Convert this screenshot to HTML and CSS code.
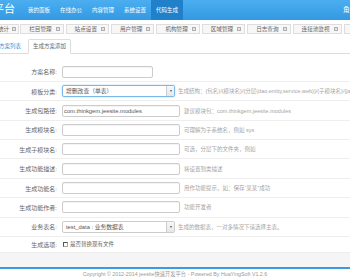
FILE: index.html
```html
<!DOCTYPE html>
<html lang="zh-CN">
<head>
    <meta charset="UTF-8">
    <title>生成方案添加</title>
    <link rel="stylesheet" href="styles.css">
</head>
<body>
    <!-- Top Menu -->
    <header class="topbar">
        <div class="brand">平台</div>
        <ul class="menu">
            <li><a href="#">我的面板</a></li>
            <li><a href="#">在线办公</a></li>
            <li><a href="#">内容管理</a></li>
            <li><a href="#">系统设置</a></li>
            <li class="active"><a href="#">代码生成</a></li>
        </ul>
        <div class="user">角色</div>
    </header>

    <!-- Open Page Tabs -->
    <div class="tabbar">
        <div class="tab first">统计<i class="close"></i></div>
        <div class="tab">栏目管理<i class="close"></i></div>
        <div class="tab">站点设置<i class="close"></i></div>
        <div class="tab">用户管理<i class="close"></i></div>
        <div class="tab">机构管理<i class="close"></i></div>
        <div class="tab">区域管理<i class="close"></i></div>
        <div class="tab">日志查询<i class="close"></i></div>
        <div class="tab">连接池监视<i class="close"></i></div>
        <div class="tab">全部<i class="close"></i></div>
    </div>

    <!-- Sub Navigation -->
    <ul class="nav-tabs">
        <li><a href="#">方案列表</a></li>
        <li class="active"><a href="#">生成方案添加</a></li>
    </ul>

    <!-- Scheme Form -->
    <form class="form">
        <div class="group">
            <label class="label">方案名称:</label>
            <div class="controls">
                <input type="text" class="input short" value="">
            </div>
        </div>
        <div class="group">
            <label class="label">模板分类:</label>
            <div class="controls">
                <div class="select focus">
                    <span class="select-text">增删改查（单表）</span>
                    <span class="select-arrow"><b></b></span>
                </div>
                <span class="help narrow">生成结构：{包名}/{模块名}/{分层(dao,entity,service,web)}/{子模块名}/{java类}</span>
            </div>
        </div>
        <div class="group">
            <label class="label">生成包路径:</label>
            <div class="controls">
                <input type="text" class="input" value="com.thinkgem.jeesite.modules">
                <span class="help">建议模块包：com.thinkgem.jeesite.modules</span>
            </div>
        </div>
        <div class="group">
            <label class="label">生成模块名:</label>
            <div class="controls">
                <input type="text" class="input" value="">
                <span class="help">可理解为子系统名，例如 sys</span>
            </div>
        </div>
        <div class="group">
            <label class="label">生成子模块名:</label>
            <div class="controls">
                <input type="text" class="input" value="">
                <span class="help">可选，分层下的文件夹，例如</span>
            </div>
        </div>
        <div class="group">
            <label class="label">生成功能描述:</label>
            <div class="controls">
                <input type="text" class="input" value="">
                <span class="help">将设置到类描述</span>
            </div>
        </div>
        <div class="group">
            <label class="label">生成功能名:</label>
            <div class="controls">
                <input type="text" class="input" value="">
                <span class="help">用作功能提示，如：保存“某某”成功</span>
            </div>
        </div>
        <div class="group">
            <label class="label">生成功能作者:</label>
            <div class="controls">
                <input type="text" class="input" value="">
                <span class="help">功能开发者</span>
            </div>
        </div>
        <div class="group">
            <label class="label">业务表名:</label>
            <div class="controls">
                <div class="select">
                    <span class="select-text">test_data : 业务数据表</span>
                    <span class="select-arrow"><b></b></span>
                </div>
                <span class="help narrow">生成的数据表，一对多情况下请选择主表。</span>
            </div>
        </div>
        <div class="group last">
            <label class="label">生成选项:</label>
            <div class="controls">
                <span class="check"><i class="box"></i>是否替换现有文件</span>
            </div>
        </div>
        <div class="actions"></div>
    </form>

    <!-- Footer -->
    <footer class="footer">Copyright &copy; 2012-2014 jeesite快速开发平台 - Powered By HuaYingSoft V1.2.6</footer>
</body>
</html>
```

FILE: styles.css
```css
/* General Reset */
* {
    box-sizing: border-box;
}

body {
    margin: 0;
    width: 350px;
    height: 280px;
    overflow: hidden;
    background: #fff;
    color: #555;
    font-family: "Liberation Sans", "Noto Sans CJK SC", sans-serif;
}

ul {
    margin: 0;
    padding: 0;
    list-style: none;
}

a {
    text-decoration: none;
}

/* Top Menu */
.topbar {
    display: flex;
    height: 20px;
    background: linear-gradient(#4aaef0, #3499e2);
    color: #fff;
}

.brand {
    flex: none;
    width: 30px;
    margin-left: -7px;
    font-size: 11px;
    line-height: 18px;
    white-space: nowrap;
}

.menu {
    display: flex;
}

.menu a {
    display: block;
    padding: 0 5px;
    font-size: 5.5px;
    line-height: 20px;
    color: #fff;
}

.menu .active a {
    background: #2080c9;
}

.user {
    margin-left: auto;
    width: 7px;
    overflow: hidden;
    white-space: nowrap;
    font-size: 6.5px;
    line-height: 20px;
}

/* Open Page Tabs */
.tabbar {
    display: flex;
    height: 10px;
    margin-top: 4px;
}

.tab {
    flex: none;
    display: flex;
    align-items: center;
    gap: 4px;
    padding: 0 3px 0 8px;
    margin-right: 2px;
    border: 1px solid #dedede;
    background: #f7f7f7;
    font-size: 5.6px;
    color: #666;
    white-space: nowrap;
}

.tab.first {
    margin-left: -11px;
    gap: 3px;
    padding-right: 2px;
    margin-right: 1px;
}

.close {
    width: 4px;
    height: 4px;
    border: 1px solid #b0b0b0;
    background: #e6e6e6;
}

/* Sub Navigation */
.nav-tabs {
    display: flex;
    margin: 5px 0 0 -6px;
    border-bottom: 1px solid #ddd;
}

.nav-tabs li {
    margin-bottom: -1px;
    margin-right: 2px;
}

.nav-tabs a {
    display: block;
    padding: 0 4px;
    font-size: 5.5px;
    line-height: 13px;
    color: #3390da;
    border: 1px solid transparent;
    border-radius: 2px 2px 0 0;
}

.nav-tabs .active a {
    color: #666;
    background: #fff;
    border-color: #ddd #ddd transparent;
}

/* Scheme Form */
.form {
    margin-top: 8.6px;
}

.group {
    display: flex;
    align-items: center;
    padding: 3.2px 0;
    border-bottom: 1px solid #eeeeee;
}

.label {
    flex: none;
    width: 57px;
    text-align: right;
    font-size: 6px;
    color: #666;
}

.controls {
    flex: none;
    display: flex;
    align-items: center;
    margin-left: 5px;
}

.input {
    flex: none;
    width: 118px;
    height: 12px;
    margin: 0;
    padding: 0 1px;
    border: 1px solid #ccc;
    border-radius: 2px;
    box-shadow: inset 0 1px 1px rgba(0, 0, 0, 0.05);
    font-family: inherit;
    font-size: 5.8px;
    color: #555;
    outline: none;
}

.input.short {
    width: 91px;
}

.select {
    flex: none;
    display: flex;
    width: 113px;
    height: 12px;
    border: 1px solid #ccc;
    border-radius: 2px;
    background: #fff;
}

.select.focus {
    border-color: #7db9e8;
    box-shadow: 0 0 2px rgba(82, 168, 236, 0.5);
}

.select-text {
    flex: 1;
    padding-left: 3px;
    font-size: 5.8px;
    line-height: 10px;
    color: #555;
    white-space: nowrap;
}

.select-arrow {
    flex: none;
    width: 8px;
    display: flex;
    align-items: center;
    justify-content: center;
    border-left: 1px solid #ccc;
    background: linear-gradient(#f8f8f8, #e6e6e6);
}

.select-arrow b {
    border-left: 1.5px solid transparent;
    border-right: 1.5px solid transparent;
    border-top: 2px solid #555;
}

.help {
    margin-left: 4px;
    font-size: 5.5px;
    color: #a5a5a5;
    white-space: nowrap;
}

.help.narrow {
    margin-left: 3px;
}

.check {
    display: flex;
    align-items: center;
    gap: 2px;
    margin-left: 1px;
    font-size: 5.5px;
    line-height: 8.6px;
    color: #666;
}

.box {
    width: 5px;
    height: 5px;
    border: 1px solid #555;
    border-right-color: #aaa;
    border-bottom-color: #aaa;
    background: #fff;
}

.actions {
    height: 13.6px;
    background: #f5f5f5;
}

/* Footer */
.footer {
    border-top: 2px solid #3a9ae2;
    text-align: center;
    font-size: 5.3px;
    line-height: 11px;
    color: #999;
    white-space: nowrap;
}
```
